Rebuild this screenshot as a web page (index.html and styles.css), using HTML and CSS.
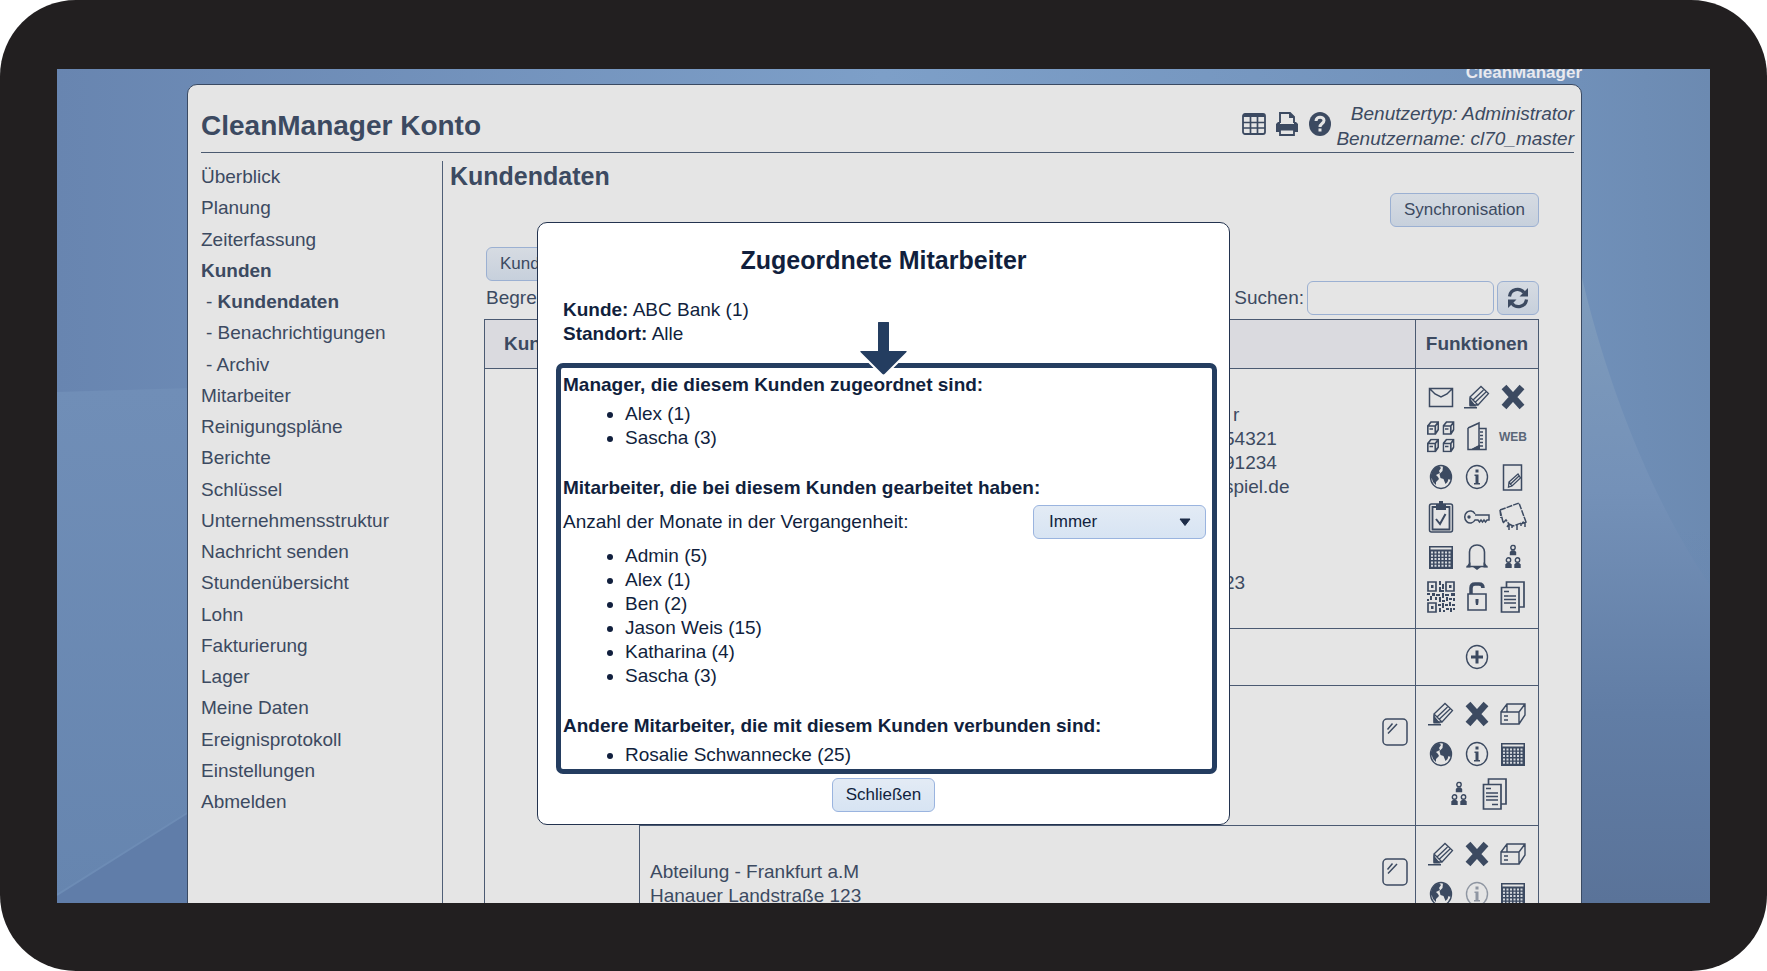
FILE: index.html
```html
<!DOCTYPE html>
<html lang="de">
<head>
<meta charset="utf-8">
<meta name="viewport" content="width=device-width, initial-scale=1">
<title>CleanManager Konto – Kundendaten</title>
<link rel="stylesheet" href="styles.css">
</head>
<body>
<svg class="sprite" aria-hidden="true">
  <symbol id="i-mail" viewBox="0 0 28 32"><path d="M2.5 7.5h23v18h-23zM3 8l5 5 6 3 6-3 5-5" fill="none" stroke="currentColor" stroke-width="1.5"/></symbol>
  <symbol id="i-edit" viewBox="0 0 28 32"><path d="M7 16L18 5.500l7.500 7L15 24zM10 19l10.500-10M12.500 21L23 11M7 16v8h8" fill="none" stroke="currentColor" stroke-width="1.300"/><path d="M6.500 17l7 8.500H6.500zM1 26h13v1.500H1z" fill="currentColor"/></symbol>
  <symbol id="i-x" viewBox="0 0 28 32"><path d="M5 6l18 20M23 6L5 26" stroke="currentColor" stroke-width="6.500"/></symbol>
  <symbol id="i-minibox" viewBox="0 0 12 14"><path d="M.8 5h7.500v8H.8zM.8 5L4 1h7.300v7.500L8.300 13M8.300 5l3-4M2.500 8h3.500" fill="none" stroke="currentColor" stroke-width="1.700"/></symbol>
  <symbol id="i-boxes" viewBox="0 0 28 32"><use href="#i-minibox" width="12" height="14"/><use href="#i-minibox" x="15.500" width="12" height="14"/><use href="#i-minibox" y="17.500" width="12" height="14"/><use href="#i-minibox" x="15.500" y="17.500" width="12" height="14"/></symbol>
  <symbol id="i-door" viewBox="0 0 28 32"><path d="M5 7l11-5v23L9 28.500M5 7v21.500h18V7.500h-7M17 11h3M17 14.500h3M17 18h3M17 21.500h3M17 25h3" fill="none" stroke="currentColor" stroke-width="1.500"/><path d="M8 28.500l9-5v5z" fill="currentColor"/></symbol>
  <symbol id="i-globe" viewBox="0 0 28 32"><ellipse cx="14" cy="16" rx="10.500" ry="11.500" fill="none" stroke="currentColor" stroke-width="1.400"/><path d="M4 14c1-5 4-8 8-9l2 2-2 3 1 2-4 2 2 2 1 2-3 3v3l-3-3-1-3-1-1zM16 5c5 1 8 5 8.500 10l-1 4-2-1-1 3-2 2-2-5-3-1-1-4 3-3z" fill="currentColor"/></symbol>
  <symbol id="i-info" viewBox="0 0 28 32"><ellipse cx="14" cy="16" rx="10.500" ry="11.500" fill="none" stroke="currentColor" stroke-width="1.400"/><path d="M12.500 8.500h3v3h-3zM11.500 13.500h4V22h1.500v1.500h-6V22h1.500v-7h-1z" fill="currentColor"/></symbol>
  <symbol id="i-note" viewBox="0 0 28 32"><path d="M4.500 4h18v25h-18z" fill="none" stroke="currentColor" stroke-width="1.500"/><path d="M10 21l9-8 2.500 4-8.500 8-3.500 1zM11.500 23l8.500-8M10 21l3 4" fill="none" stroke="currentColor" stroke-width="1.300"/></symbol>
  <symbol id="i-clip" viewBox="0 0 28 32"><rect x="2.500" y="3" width="23" height="28" rx="2" fill="none" stroke="currentColor" stroke-width="1.500"/><path d="M5.500 6h17v22.500h-17z" fill="none" stroke="currentColor" stroke-width="1.800"/><path d="M9 3h3V0h4v3h3v6H9z" fill="currentColor"/><path d="M9 18l4 5 5.500-10" fill="none" stroke="currentColor" stroke-width="2"/></symbol>
  <symbol id="i-key" viewBox="0 0 28 32"><path d="M12 13a5.500 6 0 1 0 0 6h3l1.500 2 1.500-2 1.500 2 1.500-2 1.500 2 1.500-2h2v-5H12" fill="none" stroke="currentColor" stroke-width="1.500"/><circle cx="6" cy="16" r="1.700" fill="currentColor"/></symbol>
  <symbol id="i-cloth" viewBox="0 0 28 32"><path d="M1 9l19-7 7 19-5 2v3M1 9l3 12M1 9l1 8M4 22l3-3 3 4-2 3M10 23l4 2 11-4M10 23v7M18 24v5M26 21v5M13 24v3" fill="none" stroke="currentColor" stroke-width="1.500" stroke-dasharray="6 1"/></symbol>
  <symbol id="i-cal" viewBox="0 0 28 32"><path d="M2 5h24v23H2z" fill="currentColor"/><path d="M3.500 6.500h21v2h-21z" fill="#e5e5e5"/><path d="M4 11.500h20M4 14.800h20M4 18.100h20M4 21.400h20M4 24.700h20" stroke="#d5d9de" stroke-width="2" stroke-dasharray="2 1.500"/></symbol>
  <symbol id="i-bell" viewBox="0 0 28 32"><path d="M3.500 25.500h21M6.500 24.500V11c0-4 3-7 7.500-7s7.500 3 7.500 7v13.500" fill="none" stroke="currentColor" stroke-width="1.600"/><path d="M3 26.500l3.500-5h1v5zM25 26.500l-3.500-5h-1v5zM10 26h8l-4 3z" fill="currentColor"/></symbol>
  <symbol id="i-person" viewBox="0 0 8 11"><circle cx="4" cy="3" r="2.200" fill="none" stroke="currentColor" stroke-width="1.400"/><path d="M.8 11V7.500l1.700-1.800h3l1.700 1.800V11z" fill="currentColor"/></symbol>
  <symbol id="i-team" viewBox="0 0 28 32"><use href="#i-person" x="10" y="3.500" width="8" height="11"/><use href="#i-person" x="5.500" y="16" width="8" height="11"/><use href="#i-person" x="14.500" y="16" width="8" height="11"/></symbol>
  <symbol id="i-qr" viewBox="0 0 28 32"><path d="M1 1h8v9H1zM19 1h8v9h-8zM1 22h8v9H1z" fill="none" stroke="currentColor" stroke-width="1.700"/><path d="M4 4h2.500v3H4zM22 4h2.500v3H22zM4 25h2.500v3H4zM12 0h2v4h-2zM15 3h2v5h-2zM12 6h2v5h-2zM14 9h3v2h-3zM0 12h3v2H0zM5 12h3v3H5zM3 15h2v4H3zM9 13h4v2H9zM8 16h2v3H8zM0 18h2v2H0zM12 16h2v5h-2zM15 12h2v5h-2zM18 13h4v2h-4zM24 12h4v3h-4zM19 16h2v4h-2zM22 17h3v2h-3zM26 17h2v3h-2zM15 19h3v2h-3zM11 23h3v2h-3zM15 22h2v5h-2zM12 27h2v4h-2zM18 23h3v2h-3zM22 21h2v4h-2zM25 23h3v2h-3zM19 27h3v2h-3zM16 29h2v2h-2zM23 27h2v4h-2zM26 27h2v2h-2z" fill="currentColor"/></symbol>
  <symbol id="i-lock" viewBox="0 0 28 32"><path d="M5 13h18v16H5z" fill="none" stroke="currentColor" stroke-width="1.600"/><path d="M8 13V7c0-3 2-4 4-4h4c2 0 4 1 4 4" fill="none" stroke="currentColor" stroke-width="3.500"/><path d="M12.500 18h3v3l-.5 3h-2l-.5-3z" fill="currentColor"/></symbol>
  <symbol id="i-docs" viewBox="0 0 28 32"><path d="M7.500 6V1h17.500v25h-5M2.500 6.500H20V31H2.500z" fill="none" stroke="currentColor" stroke-width="1.700"/><path d="M5 10.500h5M5 15h12M5 18.500h12M5 22h12M11 26.500h6" stroke="currentColor" stroke-width="1.700"/></symbol>
  <symbol id="i-add" viewBox="0 0 28 32"><ellipse cx="14" cy="16" rx="10.500" ry="11.500" fill="none" stroke="currentColor" stroke-width="1.400"/><path d="M12.500 9.500h3v5H20v3h-4.500v5h-3v-5H8v-3h4.500z" fill="currentColor"/></symbol>
  <symbol id="i-box" viewBox="0 0 28 32"><path d="M2 14h18v12H2zM2 14l6-8h18v11l-6 9M20 14l6-8M8 6v8M5 18h4M5 22h4" fill="none" stroke="currentColor" stroke-width="1.400"/></symbol>
  <symbol id="i-mirror" viewBox="0 0 28 32"><rect x="2" y="3" width="24" height="26" rx="4" fill="none" stroke="currentColor" stroke-width="1.500"/><path d="M6.500 13.500l5-6M7 17.500l9-9.500" stroke="currentColor" stroke-width="1.500"/></symbol>
</svg>

<div class="device">
  <div class="screen">
    <svg class="backdrop" viewBox="0 0 1653 834" preserveAspectRatio="none" aria-hidden="true">
      <defs>
        <linearGradient id="g-sky" x1="0" x2="1"><stop offset="0" stop-color="#6885b0"/><stop offset=".5" stop-color="#7d9fc8"/><stop offset=".92" stop-color="#7090b9"/><stop offset="1" stop-color="#6c8ab1"/></linearGradient>
        <linearGradient id="g-shade" x1="0" y1="0" x2="0" y2="1"><stop offset=".55" stop-color="#5a78a8" stop-opacity="0"/><stop offset="1" stop-color="#5a78a8" stop-opacity=".6"/></linearGradient>
        <linearGradient id="g-wave" x1="0" y1="0" x2="0" y2="1"><stop offset="0" stop-color="#7f9cbc"/><stop offset=".35" stop-color="#7491b8"/><stop offset=".7" stop-color="#617da5"/><stop offset="1" stop-color="#5a7399"/></linearGradient>
        <linearGradient id="g-left" x1="0" y1="0" x2="0" y2="1"><stop offset="0" stop-color="#708eb7"/><stop offset="1" stop-color="#6685af"/></linearGradient>
      </defs>
      <path d="M0 0h1653v834H0z" fill="url(#g-sky)"/>
      <path d="M0 0h1653v834H0z" fill="url(#g-shade)"/>
      <path d="M0 323L135 319V834H0z" fill="url(#g-left)"/>
      <path d="M0 826L135 741V834H0z" fill="#607da9"/>
      <path d="M0 826L135 741" stroke="#6d8cb5" stroke-width="2"/>
      <path d="M1523 200C1550 320 1600 440 1653 516V834H1523z" fill="url(#g-wave)"/>
    </svg>

    <div class="page">
      <div class="brand">CleanManager</div>
      <div class="panel">
        <header class="head">
          <h1>CleanManager Konto</h1>
          <div class="head-tools">
            <button type="button" class="tool" aria-label="Tabelle"><svg viewBox="0 0 24 24"><rect x="1" y="2" width="22" height="20" rx="2" fill="none" stroke="currentColor" stroke-width="1.800"/><path d="M1 2h22v3H1z" fill="currentColor"/><path d="M1 10.500h22M1 16h22M8.500 4v18M15.500 4v18" stroke="currentColor" stroke-width="1.700"/></svg></button>
            <button type="button" class="tool" aria-label="Drucken"><svg viewBox="0 0 24 24"><path d="M5 11V1h10l4 4v6M15 1v4h4" fill="none" stroke="currentColor" stroke-width="1.900"/><path d="M1 12l2-2h2v2h14v-2h2l2 2v8h-4v-3H5v3H1z" fill="currentColor"/><path d="M5 17.500h14V23H5z" fill="none" stroke="currentColor" stroke-width="1.800"/></svg></button>
            <button type="button" class="tool" aria-label="Hilfe"><svg viewBox="0 0 24 24"><ellipse cx="12" cy="12" rx="11" ry="12" fill="currentColor"/><path d="M8 9c0-5 8-5 8-.5 0 3-4 3-4 6.500" fill="none" stroke="#e5e5e5" stroke-width="3"/><path d="M10.500 16.500h3v3h-3z" fill="#e5e5e5"/></svg></button>
          </div>
          <div class="user">Benutzertyp: Administrator<br>Benutzername: cl70_master</div>
        </header>

        <div class="body">
          <nav class="nav">
            <ul>
              <li><a href="#">Überblick</a></li>
              <li><a href="#">Planung</a></li>
              <li><a href="#">Zeiterfassung</a></li>
              <li class="on"><a href="#">Kunden</a></li>
              <li class="sub">- <a href="#" class="on">Kundendaten</a></li>
              <li class="sub">- <a href="#">Benachrichtigungen</a></li>
              <li class="sub">- <a href="#">Archiv</a></li>
              <li><a href="#">Mitarbeiter</a></li>
              <li><a href="#">Reinigungspläne</a></li>
              <li><a href="#">Berichte</a></li>
              <li><a href="#">Schlüssel</a></li>
              <li><a href="#">Unternehmensstruktur</a></li>
              <li><a href="#">Nachricht senden</a></li>
              <li><a href="#">Stundenübersicht</a></li>
              <li><a href="#">Lohn</a></li>
              <li><a href="#">Fakturierung</a></li>
              <li><a href="#">Lager</a></li>
              <li><a href="#">Meine Daten</a></li>
              <li><a href="#">Ereignisprotokoll</a></li>
              <li><a href="#">Einstellungen</a></li>
              <li><a href="#">Abmelden</a></li>
            </ul>
          </nav>

          <main class="main">
            <h2>Kundendaten</h2>
            <div class="content">
              <div class="row-end"><button type="button" class="btn">Synchronisation</button></div>
              <div class="row-start"><button type="button" class="btn">Kunden</button></div>
              <div class="filter">
                <span>Begrenzen</span>
                <div class="search">
                  <label for="q">Suchen:</label>
                  <input id="q" type="text">
                  <button type="button" class="btn btn-icon" aria-label="Aktualisieren"><svg viewBox="0 0 22 22"><path d="M2.500 9.500C3.500 1.500 13 .5 17 5.500M19.500 12.500c-1 8-10.500 9-14.500 4" fill="none" stroke="currentColor" stroke-width="3.200"/><path d="M21 1v8.500h-8.500zM1 21v-8.500h8.500z" fill="currentColor"/></svg></button>
                </div>
              </div>

              <table class="grid">
                <colgroup><col class="c-id"><col><col class="c-fn"></colgroup>
                <thead><tr><th class="th-left">Kunden</th><th></th><th>Funktionen</th></tr></thead>
                <tbody>
                  <tr>
                    <td rowspan="4"></td>
                    <td><div class="cell"><p class="contact"><span class="indent">r</span><br>54321<br>91234<br>spiel.de<br><br><br><br>23</p></div></td>
                    <td><div class="icons">
                      <a href="#" aria-label="E-Mail"><svg><use href="#i-mail"/></svg></a>
                      <a href="#" aria-label="Bearbeiten"><svg><use href="#i-edit"/></svg></a>
                      <a href="#" aria-label="Löschen"><svg><use href="#i-x"/></svg></a>
                      <a href="#" aria-label="Standorte"><svg><use href="#i-boxes"/></svg></a>
                      <a href="#" aria-label="Gebäude"><svg><use href="#i-door"/></svg></a>
                      <a href="#" class="web">WEB</a>
                      <a href="#" aria-label="Karte"><svg><use href="#i-globe"/></svg></a>
                      <a href="#" aria-label="Info"><svg><use href="#i-info"/></svg></a>
                      <a href="#" aria-label="Notiz"><svg><use href="#i-note"/></svg></a>
                      <a href="#" aria-label="Aufgaben"><svg><use href="#i-clip"/></svg></a>
                      <a href="#" aria-label="Schlüssel"><svg><use href="#i-key"/></svg></a>
                      <a href="#" aria-label="Reinigung"><svg><use href="#i-cloth"/></svg></a>
                      <a href="#" aria-label="Kalender"><svg><use href="#i-cal"/></svg></a>
                      <a href="#" aria-label="Benachrichtigung"><svg><use href="#i-bell"/></svg></a>
                      <a href="#" aria-label="Mitarbeiter"><svg><use href="#i-team"/></svg></a>
                      <a href="#" aria-label="QR-Code"><svg><use href="#i-qr"/></svg></a>
                      <a href="#" aria-label="Zugang"><svg><use href="#i-lock"/></svg></a>
                      <a href="#" aria-label="Dokumente"><svg><use href="#i-docs"/></svg></a>
                    </div></td>
                  </tr>
                  <tr>
                    <td></td>
                    <td><div class="icons icons-one"><a href="#" aria-label="Hinzufügen"><svg><use href="#i-add"/></svg></a></div></td>
                  </tr>
                  <tr>
                    <td><div class="cell"><a href="#" class="mirror" aria-label="Fenster"><svg><use href="#i-mirror"/></svg></a></div></td>
                    <td><div class="icons">
                      <a href="#" aria-label="Bearbeiten"><svg><use href="#i-edit"/></svg></a>
                      <a href="#" aria-label="Löschen"><svg><use href="#i-x"/></svg></a>
                      <a href="#" aria-label="Standort"><svg><use href="#i-box"/></svg></a>
                      <a href="#" aria-label="Karte"><svg><use href="#i-globe"/></svg></a>
                      <a href="#" aria-label="Info"><svg><use href="#i-info"/></svg></a>
                      <a href="#" aria-label="Kalender"><svg><use href="#i-cal"/></svg></a>
                      <a href="#" aria-label="Mitarbeiter"><svg><use href="#i-team"/></svg></a>
                      <a href="#" aria-label="Dokumente"><svg><use href="#i-docs"/></svg></a>
                    </div></td>
                  </tr>
                  <tr>
                    <td><div class="cell"><p>Abteilung - Frankfurt a.M<br>Hanauer Landstraße 123</p><a href="#" class="mirror" aria-label="Fenster"><svg><use href="#i-mirror"/></svg></a></div></td>
                    <td><div class="icons">
                      <a href="#" aria-label="Bearbeiten"><svg><use href="#i-edit"/></svg></a>
                      <a href="#" aria-label="Löschen"><svg><use href="#i-x"/></svg></a>
                      <a href="#" aria-label="Standort"><svg><use href="#i-box"/></svg></a>
                      <a href="#" aria-label="Karte"><svg><use href="#i-globe"/></svg></a>
                      <a href="#" class="faded" aria-label="Info"><svg><use href="#i-info"/></svg></a>
                      <a href="#" aria-label="Kalender"><svg><use href="#i-cal"/></svg></a>
                    </div></td>
                  </tr>
                </tbody>
              </table>
            </div>
          </main>
        </div>
      </div>
    </div>

    <div class="overlay">
      <section class="modal" role="dialog" aria-labelledby="modal-title">
        <h2 id="modal-title">Zugeordnete Mitarbeiter</h2>
        <p class="facts"><b>Kunde:</b> ABC Bank (1)<br><b>Standort:</b> Alle</p>
        <svg class="arrow" viewBox="0 0 52 60" aria-hidden="true"><path d="M19 3.500q0-1.500 1.500-1.500h10q1.500 0 1.500 1.500V31h16q3 .500 1 3L27.500 55.500q-2 2-4 0L2 34q-2-2.500 1-3h16z" fill="#243d60" stroke="#fff" stroke-width="2"/></svg>
        <div class="frame">
          <h3>Manager, die diesem Kunden zugeordnet sind:</h3>
          <ul><li>Alex (1)</li><li>Sascha (3)</li></ul>
          <h3>Mitarbeiter, die bei diesem Kunden gearbeitet haben:</h3>
          <div class="months">
            <label for="months">Anzahl der Monate in der Vergangenheit:</label>
            <div class="pick">
              <select id="months"><option>Immer</option></select>
              <svg viewBox="0 0 12 8" aria-hidden="true"><path d="M1 1h10L6 7.500z" fill="#1d2c48" stroke="#1d2c48" stroke-linejoin="round"/></svg>
            </div>
          </div>
          <ul><li>Admin (5)</li><li>Alex (1)</li><li>Ben (2)</li><li>Jason Weis (15)</li><li>Katharina (4)</li><li>Sascha (3)</li></ul>
          <h3>Andere Mitarbeiter, die mit diesem Kunden verbunden sind:</h3>
          <ul><li>Rosalie Schwannecke (25)</li></ul>
        </div>
        <button type="button" class="btn btn-light">Schließen</button>
      </section>
    </div>
  </div>
</div>
</body>
</html>
```
FILE: styles.css
```css
* { box-sizing: border-box; }

body {
  margin: 0;
  background: #fff;
  color: #3c4a61;
  font-family: "Liberation Sans", Arial, sans-serif;
  font-size: 19px;
  line-height: 24px;
}

h1, h2, h3, p, ul { margin: 0; padding: 0; }
a { color: inherit; text-decoration: none; }
button, input, select { font: inherit; color: inherit; }
.sprite { position: absolute; width: 0; height: 0; }

/* Device frame */
.device {
  height: 100vh;
  padding: 69px 57px 68px;
  background: #221f20;
  border-radius: 76px;
}

.screen {
  position: relative;
  height: 100%;
  overflow: hidden;
  background: #6c89b3;
}

.backdrop { position: absolute; inset: 0; width: 100%; height: 100%; }

/* Page */
.page { position: relative; padding: 0 128px 0 130px; }

.brand {
  height: 15px;
  color: #e9e9ee;
  font-size: 17px;
  font-weight: bold;
  line-height: 8px;
  text-align: right;
}

.panel {
  padding: 0 7px 0 13px;
  background: #e5e5e5;
  border: 1px solid #3a4a63;
  border-radius: 10px;
}

.head {
  display: flex;
  align-items: center;
  height: 68px;
  padding-top: 14px;
  border-bottom: 1px solid #4b5a70;
}

.head h1 { flex: 1; font-size: 28px; line-height: 32px; }
.head-tools { display: flex; gap: 9px; margin-right: 4px; padding-bottom: 3px; }
.tool { width: 24px; height: 24px; padding: 0; border: 0; background: none; }
.tool svg { display: block; width: 24px; height: 24px; }
.user { font-style: italic; line-height: 25px; text-align: right; }

.body { display: flex; padding-top: 8px; }
.nav { flex: none; width: 241px; padding-top: 4px; }

.nav ul {
  display: flex;
  flex-direction: column;
  justify-content: space-between;
  height: 649px;
  list-style: none;
}

.nav .sub { padding-left: 5px; }
.nav .on { font-weight: bold; }

.main { flex: 1; padding: 0 35px 0 7px; border-left: 1px solid #4f5f77; }
.main h2 { padding-bottom: 2px; font-size: 25px; line-height: 30px; }
.content { padding-left: 34px; }

.row-end { display: flex; justify-content: flex-end; padding-bottom: 20px; }
.row-start { display: flex; padding-left: 2px; }

.btn {
  height: 34px;
  padding: 0 13px;
  border: 1px solid #9bb0d2;
  border-radius: 6px;
  background: linear-gradient(#d6dbe2, #c7d0dc);
  font-size: 17px;
  line-height: 24px;
}

.filter {
  display: flex;
  align-items: center;
  justify-content: space-between;
  padding: 0 0 4px 2px;
}

.search { display: flex; align-items: center; gap: 3px; }

.search input {
  width: 187px;
  height: 34px;
  padding: 0 8px;
  border: 1px solid #9bb0d2;
  border-radius: 6px;
  background: transparent;
}

.btn-icon { width: 42px; padding: 0 9px; }
.btn-icon svg { display: block; width: 22px; height: 22px; }

/* Customer table */
.grid { width: 100%; border-collapse: collapse; table-layout: fixed; }
.c-id { width: 155px; }
.c-fn { width: 123px; }
.grid th, .grid td { padding: 0; border: 1px solid #4b5a72; vertical-align: top; }
.grid th { height: 49px; background: #dadadf; vertical-align: middle; }
.grid .th-left { padding-left: 19px; text-align: left; }

.cell { display: flex; justify-content: space-between; padding: 34px 6px 0 10px; }
.contact { width: 185px; margin-left: auto; }
.indent { padding-left: 9px; }
.mirror { display: flex; align-items: center; height: 24px; margin-left: auto; }
.mirror svg { width: 28px; height: 32px; }

.icons {
  display: flex;
  flex-wrap: wrap;
  justify-content: center;
  padding: 8px 6px 11px;
}

.icons-one { padding-bottom: 8px; }

.icons a {
  display: flex;
  align-items: center;
  justify-content: center;
  width: 36px;
  height: 40px;
}

.icons svg { width: 28px; height: 32px; }
.icons .web { color: #5b6778; font-size: 12px; font-weight: bold; }
.icons .faded { opacity: 0.5; }

/* Dialog */
.overlay {
  position: absolute;
  inset: 0;
  display: flex;
  align-items: flex-start;
  justify-content: center;
  padding-top: 153px;
  color: #111f3d;
}

.modal {
  position: relative;
  display: flex;
  flex-direction: column;
  width: 693px;
  padding: 22px 0 12px;
  background: #fff;
  border: 1px solid #23334f;
  border-radius: 10px;
}

.modal h2 { font-size: 25px; line-height: 30px; text-align: center; }
.facts { padding: 23px 25px 17px; }

.frame {
  margin: 0 12px 0 18px;
  padding: 5px 6px 2px 2px;
  border: 5px solid #243d60;
  border-radius: 7px;
}

.frame h3 { padding-bottom: 5px; font-size: 19px; line-height: 24px; }
.frame ul { padding-left: 62px; }
.frame ul + h3 { padding-top: 26px; }

.arrow {
  position: absolute;
  top: 96px;
  left: 50%;
  width: 52px;
  height: 60px;
  transform: translateX(-50%);
}

.months {
  display: flex;
  align-items: center;
  justify-content: space-between;
  padding-bottom: 5px;
}

.pick { position: relative; }

.pick select {
  width: 173px;
  height: 34px;
  padding: 0 15px;
  appearance: none;
  border: 1px solid #9ab4df;
  border-radius: 6px;
  background: linear-gradient(#e3ebf5, #d7e4f3);
  font-size: 17px;
}

.pick svg {
  position: absolute;
  top: 13px;
  right: 15px;
  width: 12px;
  height: 8px;
  pointer-events: none;
}

.btn-light {
  align-self: center;
  margin-top: 4px;
  border-color: #9ab4df;
  background: linear-gradient(#e3ebf5, #d7e4f3);
}
```
